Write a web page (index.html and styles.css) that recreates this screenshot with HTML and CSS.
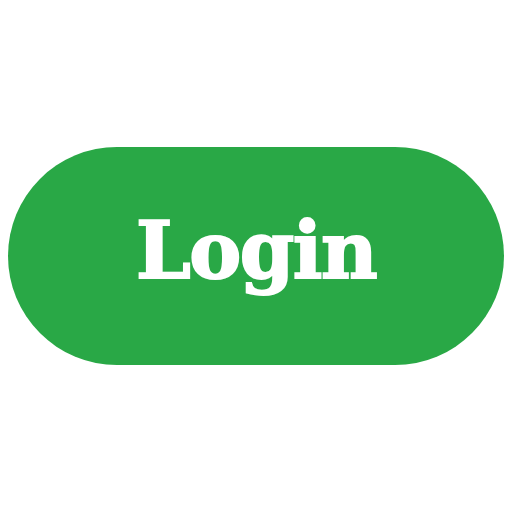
FILE: index.html
```html
<!DOCTYPE html>
<html>
<head>
<meta charset="utf-8">
<link rel="stylesheet" href="styles.css">
</head>
<body>
<div class="page">
  <button class="login">Login</button>
</div>
</body>
</html>
```
FILE: styles.css
```css
html, body {
  margin: 0;
  padding: 0;
  background: #ffffff;
}
.page {
  width: 512px;
  height: 512px;
  display: flex;
  align-items: center;
  justify-content: center;
}
.login {
  width: 496px;
  height: 218px;
  border: none;
  border-radius: 109px / 109px;
  background: #29a846;
  color: #ffffff;
  font-family: "DejaVu Serif", serif;
  font-weight: bold;
  font-size: 78px;
  line-height: 1;
  letter-spacing: -1.5px;
  -webkit-text-stroke: 2px #ffffff;
  padding: 0 0 10px 0;
  display: flex;
  align-items: center;
  justify-content: center;
}
```
